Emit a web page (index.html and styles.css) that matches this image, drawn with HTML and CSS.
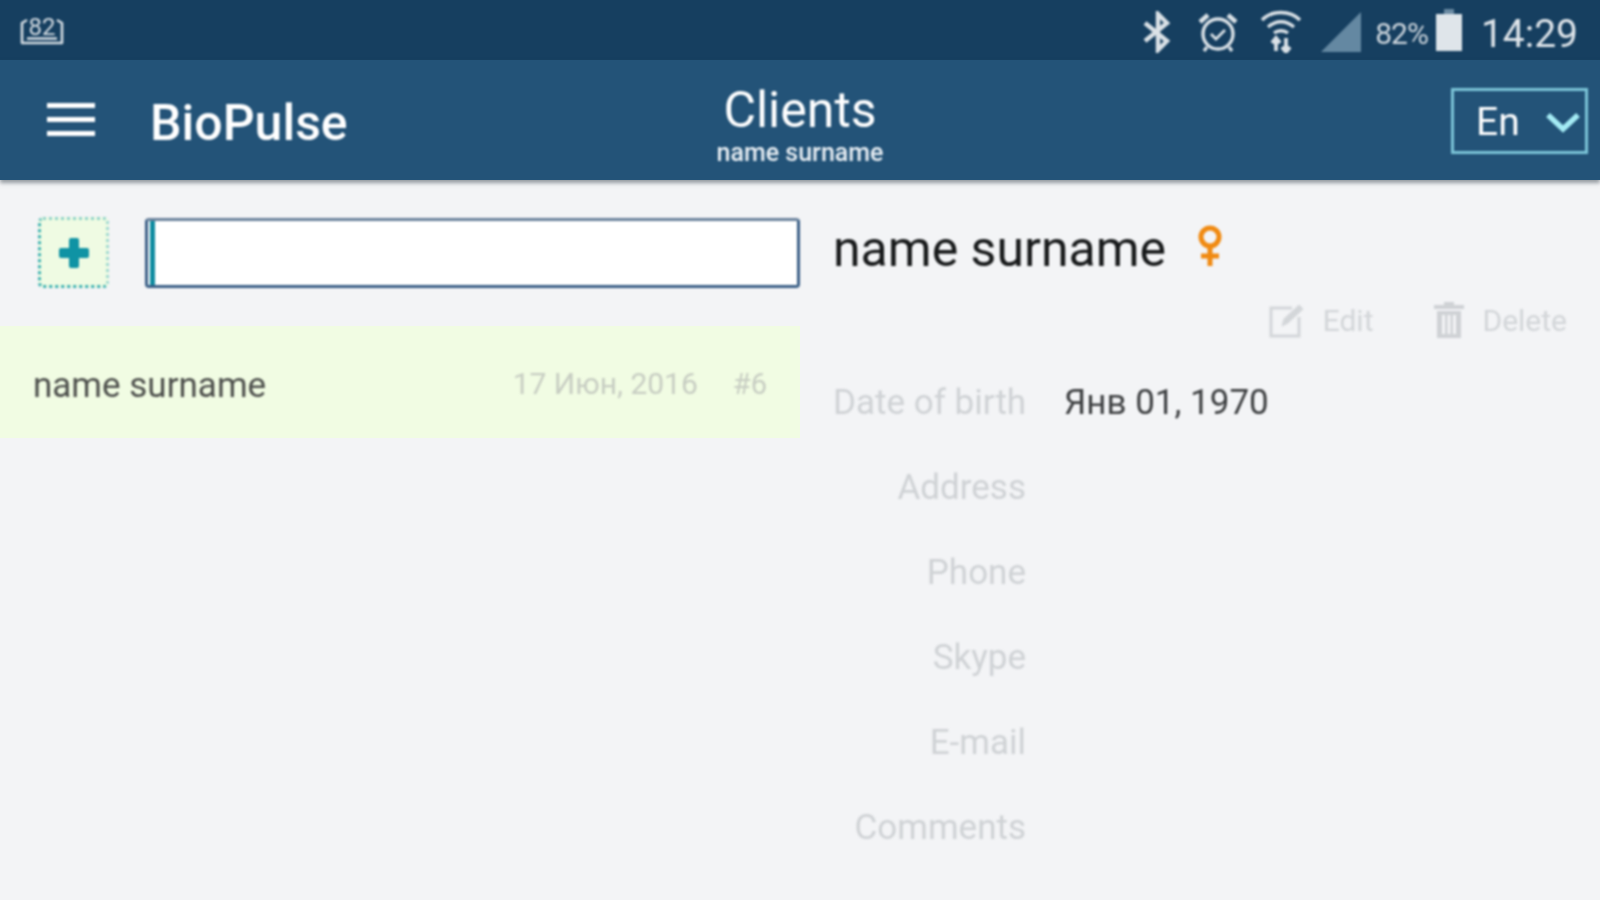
FILE: index.html
```html
<!DOCTYPE html>
<html lang="en">
<head>
<meta charset="utf-8">
<title>BioPulse</title>
<link rel="stylesheet" href="styles.css">
</head>
<body>
<div class="app">
  <div class="status">
    <svg class="st-badge" width="46" height="36" viewBox="0 0 46 36" fill="none" stroke="#d5dde3" stroke-width="2.6"><path d="M8 8L3 11v20h40V11l-5-3M3 31h40M8 26.500h30" stroke-linejoin="round"/><text x="23" y="23" text-anchor="middle" class="badge-text">82</text></svg>
    <div class="st-right">
      <svg class="st-bt" width="30" height="42" viewBox="0 0 30 42" fill="none" stroke="#dbe2e7" stroke-width="4.400"><path d="M3 12l22 18-9 9V3l9 9L3 30"/></svg>
      <svg class="st-alarm" width="40" height="42" viewBox="0 0 40 42" fill="none" stroke="#dbe2e7" stroke-width="3.400"><circle cx="20" cy="23" r="15"/><path d="M13 23l5 5 9-9" stroke-width="2.800"/><path d="M2 11l8-7M38 11l-8-7" stroke-width="4.500"/><path d="M9 36l-3 4M31 36l3 4"/></svg>
      <svg class="st-wifi" width="42" height="46" viewBox="0 0 42 46" fill="none" stroke="#dbe2e7" stroke-width="3.400"><path d="M2 13C12 3 30 3 40 13M8 20c8-7 18-7 26 0M14 26c4-3 10-3 14 0"/><path d="M16 44V31M12 36l4-5 4 5M26 31v13M22 40l4 5 4-5" stroke-width="3.800"/></svg>
      <svg class="st-signal" width="40" height="40" viewBox="0 0 40 40"><path d="M0 40L40 0v40z" fill="#6488a2"/></svg>
      <span class="st-pct">82%</span>
      <svg class="st-bat" width="26" height="42" viewBox="0 0 26 42"><path d="M8 0h10v5H8z" fill="#6b8ba3"/><path d="M0 5h26v37H0z" fill="#dfe5ea"/></svg>
      <span class="st-time">14:29</span>
    </div>
  </div>

  <header class="bar">
    <div class="bar-left">
      <svg class="burger" width="48" height="33" viewBox="0 0 48 33" fill="#fff"><rect width="48" height="5"/><rect y="14" width="48" height="5"/><rect y="28" width="48" height="5"/></svg>
      <span class="brand">BioPulse</span>
    </div>
    <div class="bar-center">
      <div class="bar-title">Clients</div>
      <div class="bar-sub">name surname</div>
    </div>
    <div class="bar-right">
      <div class="lang">
        <span>En</span>
        <svg width="34" height="22" viewBox="0 0 34 22" fill="none" stroke="#a5ecf5" stroke-width="5.500"><path d="M2 4l15 14L32 4"/></svg>
      </div>
    </div>
  </header>

  <main class="content">
    <section class="left">
      <div class="search-row">
        <button class="add" type="button">
          <svg width="32" height="32" viewBox="0 0 32 32" fill="#0f93a4"><path d="M11 3a2 2 0 0 1 2-2h6a2 2 0 0 1 2 2v8h8a2 2 0 0 1 2 2v6a2 2 0 0 1-2 2h-8v8a2 2 0 0 1-2 2h-6a2 2 0 0 1-2-2v-8H3a2 2 0 0 1-2-2v-6a2 2 0 0 1 2-2h8z"/></svg>
        </button>
        <div class="input"><span class="caret"></span></div>
      </div>
      <div class="client">
        <span class="client-name">name surname</span>
        <span class="client-date">17 Июн, 2016</span>
        <span class="client-id">#6</span>
      </div>
    </section>

    <section class="right">
      <div class="person">
        <h1 class="person-name">name surname</h1>
        <svg class="female" width="26" height="42" viewBox="0 0 26 42" fill="none" stroke="#f08a12" stroke-width="5"><circle cx="13" cy="12" r="9"/><path d="M13 21v20M4 31h18"/></svg>
      </div>
      <div class="actions">
        <div class="action">
          <svg width="36" height="36" viewBox="0 0 36 36" fill="none" stroke="#d3d6d9" stroke-width="3"><path d="M23 6H2v28h28V15"/><path d="M13 24l2-7L30 3l4 4-15 14z" fill="#d3d6d9" stroke-width="1"/></svg>
          <span>Edit</span>
        </div>
        <div class="action">
          <svg width="30" height="36" viewBox="0 0 30 36" fill="#cfd2d5"><path d="M10 0h10v3h10v4H0V3h10z"/><path d="M3 9h24v27H3zM8 13v19h3V13zM13.500 13v19h3V13zM19 13v19h3V13z" fill-rule="evenodd"/></svg>
          <span>Delete</span>
        </div>
      </div>
      <dl class="fields">
        <div class="field"><dt>Date of birth</dt><dd>Янв 01, 1970</dd></div>
        <div class="field"><dt>Address</dt><dd></dd></div>
        <div class="field"><dt>Phone</dt><dd></dd></div>
        <div class="field"><dt>Skype</dt><dd></dd></div>
        <div class="field"><dt>E-mail</dt><dd></dd></div>
        <div class="field"><dt>Comments</dt><dd></dd></div>
      </dl>
    </section>
  </main>
</div>
</body>
</html>
```
FILE: styles.css
```css
* { box-sizing: border-box; }
html, body { margin: 0; height: 100%; overflow: hidden; }
body { font-family: Roboto, "Noto Sans", sans-serif; background: #f3f4f6; }
.app { width: 1600px; height: 900px; display: flex; flex-direction: column; }

/* The reference is a soft, upscaled capture: soften the content, not the page edges. */
.st-badge, .st-right, .bar-left, .bar-center, .lang, .add, .input, .client > *, .person, .actions, .fields { filter: blur(0.8px); }

.status { height: 60px; flex: none; background: #163f60; display: flex; align-items: center; justify-content: space-between; padding: 0 22px 0 19px; color: #dfe5ea; }
.st-badge { display: block; }
.badge-text { font-size: 24px; fill: #d5dde3; stroke: none; font-family: Roboto, sans-serif; }
.st-right { display: flex; align-items: center; }
.st-bt { margin-right: 26px; margin-top: 4px; width: 30px; }
.st-alarm { margin-right: 22px; margin-top: 4px; }
.st-wifi { margin-right: 19px; }
.st-signal { margin-top: 4px; margin-right: 14px; }
.st-pct { font-size: 30px; margin-right: 8px; margin-top: 6px; letter-spacing: -1px; color: #cdd6dd; }
.st-bat { margin-right: 19px; }
.st-time { font-size: 39px; margin-top: 8px; color: #dfe5ea; }

.bar { height: 120px; flex: none; background: #235378; display: grid; grid-template-columns: 1fr auto 1fr; align-items: center; box-shadow: 0 3px 4px rgba(70, 80, 90, .55); position: relative; color: #fff; }
.bar-left { display: flex; align-items: center; padding-left: 47px; }
.burger { margin-right: 55px; margin-top: -2px; }
.brand { font-size: 50px; font-weight: 500; margin-top: 5px; }
.bar-center { text-align: center; }
.bar-title { font-size: 50px; line-height: 58px; margin-top: 8px; }
.bar-sub { font-size: 25px; line-height: 28px; font-weight: 500; color: #e8eef3; }
.bar-right { display: flex; justify-content: flex-end; padding-right: 12px; }
.lang { width: 137px; height: 66px; margin-top: 1px; border: 3px solid #7cc5d8; display: flex; align-items: center; justify-content: space-between; padding: 2px 5px 0 22px; font-size: 39px; font-weight: 400; }

.content { flex: 1; display: flex; min-height: 0; }
.left { width: 800px; flex: none; }
.search-row { display: flex; align-items: center; padding: 37px 0 38px 38px; gap: 36px; }
.add { width: 71px; height: 71px; padding: 0; background: #effbe3; border: 3px dotted #36aeb0; border-right-color: #9fd9cf; border-top-color: #8fd3c8; border-radius: 5px; display: flex; align-items: center; justify-content: center; }
.input { flex: 1; height: 70px; background: #fff; border: 3px solid #3a5f86; border-top-color: #6a829c; border-radius: 4px; padding-left: 2px; }
.caret { display: block; width: 5px; height: 100%; background: #0f8ba0; }
.client { height: 112px; background: #f1fce3; display: flex; align-items: center; padding: 6px 33px 0; font-size: 35px; }
.client-name { color: #4d4f4c; flex: 1; }
.client-date { color: #c7cdc2; font-size: 30px; margin-right: 35px; margin-top: -3px; }
.client-id { color: #c7cdc2; font-size: 29px; margin-top: -2px; }

.right { flex: 1; padding-left: 33px; }
.person { display: flex; align-items: center; height: 72px; margin-top: 33px; }
.person-name { margin: 0; font-size: 50px; font-weight: 400; color: #17191a; }
.female { margin-left: 31px; margin-top: -6px; }
.actions { display: flex; justify-content: flex-end; gap: 61px; padding-right: 33px; margin-top: 16px; height: 38px; }
.action { display: flex; align-items: center; gap: 18px; font-size: 30px; color: #d2d5d8; }
.fields { margin: 21px 0 0; }
.field { display: flex; align-items: center; height: 85px; }
.field dt { width: 193px; text-align: right; font-size: 35px; color: #cfd2d5; white-space: nowrap; }
.field dd { margin: 0 0 0 38px; font-size: 35px; color: #3c3e40; }
```
